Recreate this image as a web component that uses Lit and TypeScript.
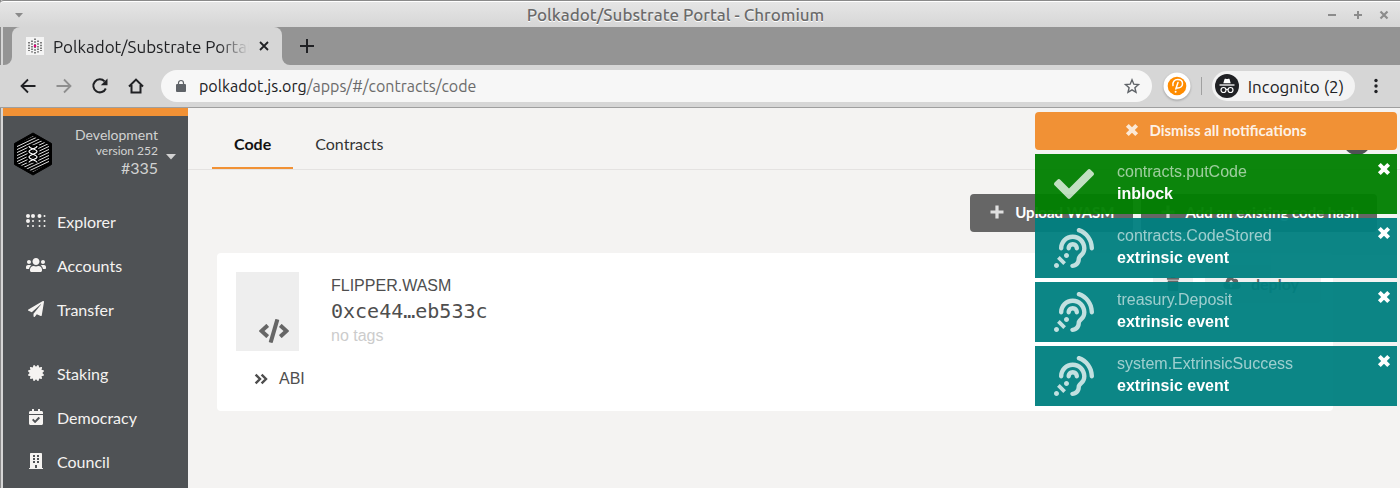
import { LitElement, html, css, svg, nothing } from "lit";
import { customElement, property } from "lit/decorators.js";

type Glyph = { box: string; body: unknown };

const glyphs: Record<string, Glyph> = {
  check: {
    box: "0 0 512 512",
    body: svg`<path d="M173.898 439.404l-166.4-166.4c-9.997-9.997-9.997-26.206 0-36.204l36.203-36.204c9.997-9.998 26.207-9.998 36.204 0L192 312.69 432.095 72.596c9.997-9.997 26.207-9.997 36.204 0l36.203 36.204c9.997 9.997 9.997 26.206 0 36.204l-294.4 294.401c-9.998 9.997-26.207 9.997-36.204-.001z"/>`,
  },
  listen: {
    box: "0 0 512 512",
    body: svg`<path d="M216 260c0 15.464-12.536 28-28 28s-28-12.536-28-28c0-44.112 35.888-80 80-80s80 35.888 80 80c0 15.464-12.536 28-28 28s-28-12.536-28-28c0-13.234-10.767-24-24-24s-24 10.766-24 24zm24-176c-97.047 0-176 78.953-176 176 0 15.464 12.536 28 28 28s28-12.536 28-28c0-66.168 53.832-120 120-120s120 53.832 120 120c0 75.164-71.009 70.311-71.997 143.622L288 404c0 28.673-23.327 52-52 52-15.464 0-28 12.536-28 28s12.536 28 28 28c59.475 0 107.876-48.328 108-107.774.595-34.428 72-48.24 72-144.226 0-97.047-78.953-176-176-176zm-80 236c-17.673 0-32 14.327-32 32s14.327 32 32 32 32-14.327 32-32-14.327-32-32-32zM32 448c-17.673 0-32 14.327-32 32s14.327 32 32 32 32-14.327 32-32-14.327-32-32-32zm480-187.993c0-1.518-.012-3.025-.045-4.531C510.076 140.525 436.157 38.47 327.994 1.511c-14.633-4.998-30.549 2.809-35.55 17.442-5 14.633 2.81 30.549 17.442 35.55 85.906 29.354 144.61 110.513 146.077 201.953l.003.188c.026 1.118.033 2.236.033 3.363 0 15.464 12.536 28 28 28s28.001-12.536 28.001-28zM152.971 439.029l-80-80L39.03 392.97l80 80 33.941-33.941z"/>`,
  },
  code: {
    box: "0 0 640 512",
    body: svg`<path d="M278.9 511.5l-61-17.7c-6.4-1.8-10-8.5-8.2-14.9L346.2 8.7c1.8-6.4 8.5-10 14.9-8.2l61 17.7c6.4 1.8 10 8.5 8.2 14.9L293.8 503.3c-1.9 6.4-8.5 10.1-14.9 8.2zm-114-112.2l43.5-46.4c4.6-4.9 4.3-12.7-.8-17.2L117 256l90.6-79.7c5.1-4.5 5.5-12.3.8-17.2l-43.5-46.4c-4.5-4.8-12.1-5.1-17-.5L3.8 247.2c-5.1 4.7-5.1 12.8 0 17.5l144.1 135.1c4.9 4.6 12.5 4.4 17-.5zm327.2.6l144.1-135.1c5.1-4.7 5.1-12.8 0-17.5L492.1 112.1c-4.8-4.5-12.4-4.3-17 .5L431.6 159c-4.6 4.9-4.3 12.7.8 17.2L523 256l-90.6 79.7c-5.1 4.5-5.5 12.3-.8 17.2l43.5 46.4c4.5 4.9 12.1 5.1 17 .6z"/>`,
  },
  plane: {
    box: "0 0 512 512",
    body: svg`<path d="M476 3.2L12.5 270.6c-18.1 10.4-15.8 35.6 2.2 43.2L121 358.4l287.3-253.2c5.5-4.9 13.3 2.6 8.6 8.3L176 407v80.5c0 23.6 28.5 32.9 42.5 15.8L282 426l124.6 52.2c14.2 6 30.4-2.9 33-18.2l72-432C515 7.8 493.3-6.8 476 3.2z"/>`,
  },
  certificate: {
    box: "0 0 512 512",
    body: svg`<path d="M458.622 255.92l45.985-45.005c13.708-12.977 7.316-36.039-10.664-40.339l-62.65-15.99 17.661-62.015c4.991-17.838-11.829-34.663-29.661-29.671l-61.994 17.667-15.984-62.671C337.085.197 313.765-6.276 300.99 7.228L256 53.57 211.011 7.229c-12.63-13.351-36.047-7.234-40.325 10.668l-15.984 62.671-61.995-17.667C74.87 57.907 58.056 74.738 63.046 92.572l17.661 62.015-62.65 15.99C.069 174.878-6.31 197.944 7.392 210.915l45.985 45.005-45.985 45.004c-13.708 12.977-7.316 36.039 10.664 40.339l62.65 15.99-17.661 62.015c-4.991 17.838 11.829 34.663 29.661 29.671l61.994-17.667 15.984 62.671c4.439 18.575 27.696 24.018 40.325 10.668L256 458.61l44.989 46.001c12.5 13.488 35.987 7.486 40.325-10.668l15.984-62.671 61.994 17.667c17.836 4.994 34.651-11.837 29.661-29.671l-17.661-62.015 62.65-15.99c17.987-4.302 24.366-27.367 10.664-40.339l-45.984-45.004z"/>`,
  },
  calendar: {
    box: "0 0 448 512",
    body: svg`<path d="M436 160H12c-6.627 0-12-5.373-12-12v-36c0-26.51 21.49-48 48-48h48V12c0-6.627 5.373-12 12-12h40c6.627 0 12 5.373 12 12v52h128V12c0-6.627 5.373-12 12-12h40c6.627 0 12 5.373 12 12v52h48c26.51 0 48 21.49 48 48v36c0 6.627-5.373 12-12 12zM12 192h424c6.627 0 12 5.373 12 12v260c0 26.51-21.49 48-48 48H48c-26.51 0-48-21.49-48-48V204c0-6.627 5.373-12 12-12zm333.296 95.947l-28.169-28.398c-4.667-4.705-12.265-4.736-16.97-.068L194.12 364.665l-45.98-46.352c-4.667-4.705-12.266-4.736-16.971-.068l-28.397 28.17c-4.705 4.667-4.736 12.265-.068 16.97l82.601 83.269c4.667 4.705 12.265 4.736 16.97.068l142.953-141.805c4.705-4.667 4.736-12.265.068-16.97z"/>`,
  },
  building: {
    box: "0 0 448 512",
    body: svg`<path fill-rule="evenodd" d="M436 480h-20V24c0-13.255-10.745-24-24-24H56C42.745 0 32 10.745 32 24v456H12c-6.627 0-12 5.373-12 12v20h448v-20c0-6.627-5.373-12-12-12zM128 64h64v64h-64zM256 64h64v64h-64zM128 160h64v64h-64zM256 160h64v64h-64zM128 256h64v64h-64zM256 256h64v64h-64zM192 384h64v96h-64z"/>`,
  },
  users: {
    box: "0 0 640 512",
    body: svg`<path d="M96 224c35.3 0 64-28.7 64-64s-28.7-64-64-64-64 28.7-64 64 28.7 64 64 64zm448 0c35.3 0 64-28.7 64-64s-28.7-64-64-64-64 28.7-64 64 28.7 64 64 64zm32 32h-64c-17.6 0-33.5 7.1-45.1 18.6 40.3 22.1 68.9 62 75.1 109.4h66c17.7 0 32-14.3 32-32v-32c0-35.3-28.7-64-64-64zm-256 0c61.9 0 112-50.1 112-112S381.9 32 320 32 208 82.1 208 144s50.1 112 112 112zm76.8 32h-8.3c-20.8 10-43.9 16-68.5 16s-47.6-6-68.5-16h-8.3C179.6 288 128 339.6 128 403.2V432c0 26.5 21.5 48 48 48h288c26.5 0 48-21.5 48-48v-28.8c0-63.6-51.6-115.2-115.2-115.2zm-223.7-13.4C161.5 263.1 145.6 256 128 256H64c-35.3 0-64 28.7-64 64v32c0 17.7 14.3 32 32 32h65.9c6.3-47.4 34.9-87.3 75.2-109.4z"/>`,
  },
  braille: {
    box: "0 0 640 512",
    body: svg`<circle cx="64" cy="96" r="64"/><circle cx="224" cy="96" r="64"/><circle cx="432" cy="96" r="64"/><circle cx="592" cy="96" r="32"/>
      <circle cx="64" cy="256" r="64"/><circle cx="224" cy="256" r="32"/><circle cx="432" cy="256" r="32"/><circle cx="592" cy="256" r="32"/>
      <circle cx="64" cy="416" r="32"/><circle cx="224" cy="416" r="32"/><circle cx="432" cy="416" r="32"/><circle cx="592" cy="416" r="32"/>`,
  },
  times: {
    box: "0 0 12 12",
    body: svg`<path d="M2 2l8 8M10 2l-8 8" stroke="currentColor" stroke-width="3.4"/>`,
  },
  plus: {
    box: "0 0 14 14",
    body: svg`<path d="M7 .5v13M.5 7h13" stroke="currentColor" stroke-width="3.2"/>`,
  },
  chevrons: {
    box: "0 0 14 12",
    body: svg`<path d="M1.6 1.6L6 6l-4.4 4.4M7.6 1.6L12 6l-4.4 4.4" fill="none" stroke="currentColor" stroke-width="2.4"/>`,
  },
  caret: { box: "0 0 10 6", body: svg`<path d="M0 0h10L5 5.5z"/>` },
  trash: {
    box: "0 0 448 512",
    body: svg`<path d="M32 464a48 48 0 0 0 48 48h288a48 48 0 0 0 48-48V128H32zM432 32H312l-9-19A24 24 0 0 0 281 0H167a24 24 0 0 0-22 13l-9 19H16A16 16 0 0 0 0 48v32a16 16 0 0 0 16 16h416a16 16 0 0 0 16-16V48a16 16 0 0 0-16-16z"/>`,
  },
  cloud: {
    box: "0 0 640 512",
    body: svg`<path fill-rule="evenodd" d="M537.6 226.6c4.1-10.7 6.4-22.4 6.4-34.6 0-53-43-96-96-96-19.7 0-38.1 6-53.3 16.2C367 64.2 315.3 32 256 32c-88.4 0-160 71.6-160 160 0 2.7.1 5.4.2 8.1C40.2 219.8 0 273.2 0 336c0 79.5 64.5 144 144 144h368c70.7 0 128-57.3 128-128 0-61.9-44-113.6-102.4-125.4zM393.4 288H328v112c0 8.8-7.2 16-16 16h-48c-8.8 0-16-7.2-16-16V288h-65.4c-14.3 0-21.4-17.2-11.3-27.3l105.4-105.4c6.2-6.2 16.4-6.2 22.6 0l105.4 105.4c10.1 10.1 2.9 27.3-11.3 27.3z"/>`,
  },
  back: {
    box: "0 0 16 16",
    body: svg`<path d="M15.5 8H2M8 1.5L1.5 8 8 14.5" fill="none" stroke="currentColor" stroke-width="1.8"/>`,
  },
  forward: {
    box: "0 0 16 16",
    body: svg`<path d="M.5 8H14M8 1.5L14.5 8 8 14.5" fill="none" stroke="currentColor" stroke-width="1.8"/>`,
  },
  reload: {
    box: "0 0 16 16",
    body: svg`<path d="M13.8 10.5A6.5 6.5 0 1 1 12.6 3.4" fill="none" stroke="currentColor" stroke-width="2"/><path d="M15.5.5v6.7H8.8z"/>`,
  },
  home: {
    box: "0 0 16 16",
    body: svg`<path d="M1 8.5L8 1.6l7 6.9M3.5 7v7.5h9V7" fill="none" stroke="currentColor" stroke-width="2"/>`,
  },
  lock: {
    box: "0 0 10 12",
    body: svg`<rect x="0" y="4" width="10" height="8" rx="1"/><path d="M2.500 5V3a2.500 2.500 0 0 1 5 0v2" fill="none" stroke="currentColor" stroke-width="1.2"/>`,
  },
  star: {
    box: "0 0 16 16",
    body: svg`<path d="M8 1.8l1.8 4.4 4.7.4-3.6 3.1 1.1 4.6L8 11.900l-4 2.400 1.100-4.600L1.500 6.600l4.700-.4z" fill="none" stroke="currentColor" stroke-width="1.4"/>`,
  },
  close: {
    box: "0 0 10 10",
    body: svg`<path d="M1 1l8 8M9 1L1 9" stroke="currentColor" stroke-width="1.8"/>`,
  },
  add: {
    box: "0 0 14 14",
    body: svg`<path d="M7 0v14M0 7h14" stroke="currentColor" stroke-width="2"/>`,
  },
  maximize: {
    box: "0 0 8 8",
    body: svg`<path d="M4 0v8M0 4h8" stroke="currentColor" stroke-width="2"/>`,
  },
  quit: {
    box: "0 0 8 8",
    body: svg`<path d="M.5.5l7 7M7.5.5l-7 7" stroke="currentColor" stroke-width="2.2"/>`,
  },
  dots: {
    box: "0 0 4 16",
    body: svg`<circle cx="2" cy="2.500" r="1.700"/><circle cx="2" cy="8" r="1.700"/><circle cx="2" cy="13.500" r="1.700"/>`,
  },
  polka: {
    box: "0 0 28 28",
    body: svg`<circle cx="14" cy="14" r="13.5" fill="#fff"/><circle cx="14" cy="14" r="9.3" fill="#ff8c00"/>
      <path d="M10 13.500c-.8-3.500 1.500-6 4.700-6s4.800 1.800 4.800 4.200-2 4.200-4.600 4.200h-1.500M15 10.500l-2.200 6.500" fill="none" stroke="#fff" stroke-width="1.500" stroke-linecap="round"/><circle cx="12.600" cy="19.800" r="1" fill="#fff"/>`,
  },
  incognito: {
    box: "0 0 24 24",
    body: svg`<circle cx="12" cy="12" r="12" fill="#202124"/><path d="M8.300 9.200l1.200-4c.2-.6.800-.6 1.300-.4 1 .3 1.500.3 2.500 0 .5-.2 1.100-.2 1.300.4l1.100 4z" fill="#fff"/>
      <path d="M4.500 11h15" stroke="#fff" stroke-width="1.300"/><circle cx="8.500" cy="16" r="2.500" fill="none" stroke="#fff" stroke-width="1.200"/><circle cx="15.500" cy="16" r="2.500" fill="none" stroke="#fff" stroke-width="1.200"/><path d="M11 15.600q1-.7 2 0" fill="none" stroke="#fff"/>`,
  },
  favicon: {
    box: "0 0 18 18",
    body: svg`<rect width="18" height="18" fill="#f4f4f4"/>
      <path d="M3 5v9M6 3.500v12M9 1.500v16M12 3.500v12M15 5v9" stroke="#555" stroke-width="1.500" stroke-dasharray="1.500 1.200"/><circle cx="9" cy="9" r="1.300" fill="#e6007a"/>`,
  },
};

const hexLines = Array.from({ length: 15 }, (_, i) => i * 3 - 4);

@customElement("ui-icon")
export class UiIcon extends LitElement {
  @property() name = "";
  static styles = css`
    :host { display: inline-flex; flex: none; }
    .glyph { width: 100%; height: 100%; fill: currentColor; display: block; overflow: visible; }
  `;
  render() {
    const g = glyphs[this.name];
    return g ? html`<svg class="glyph" viewBox=${g.box} aria-hidden="true">${g.body}</svg>` : nothing;
  }
}

@customElement("browser-chrome")
export class BrowserChrome extends LitElement {
  static styles = css`
    :host { display: block; font-family: Ubuntu, "Noto Sans", sans-serif; font-size: 17px; color: #202124; }
    button { font: inherit; color: inherit; background: none; border: 0; padding: 0; display: flex; align-items: center; }
    .title { box-sizing: border-box; height: 27px; display: grid; grid-template-columns: 1fr auto 1fr; align-items: center;
      padding: 2px 12px 0 15px; border-top: 1px solid #8a8a8a; box-shadow: inset 0 1px #fff; border-top-left-radius: 4px;
      background: linear-gradient(#e6e6e6, #d6d6d6); color: #6a6a6a; }
    .title .menu { width: 8px; height: 5px; color: #8a8a8a; }
    .title .name { font-size: 17px; font-weight: 500; line-height: 20px; text-shadow: 0 1px #fff; margin: 0; padding-right: 52px; }
    .controls { display: flex; justify-content: flex-end; gap: 18px; color: #8c8c8c; }
    .controls ui-icon { width: 8px; height: 8px; }
    .minus { width: 8px; height: 2px; background: currentColor; }
    .strip { margin-left: 3px; height: 38px; display: flex; background: #949494; }
    .edge { width: 9px; background: #d6d6d6; }
    .edge::before { content: ""; display: block; height: 100%; background: #949494; border-bottom-right-radius: 8px; }
    .tab { box-sizing: border-box; width: 270px; display: flex; align-items: center; background: #d6d6d6; border-radius: 8px 8px 0 0; padding: 0 13px 0 14px; }
    .tab .fav { width: 18px; height: 18px; margin-right: 9px; }
    .tab .label { flex: 1; min-width: 0; overflow: hidden; white-space: nowrap;
      -webkit-mask-image: linear-gradient(90deg, #000 84%, transparent); mask-image: linear-gradient(90deg, #000 84%, transparent); }
    .tab .x { width: 10px; height: 10px; margin-left: 10px; }
    .rest { flex: 1; display: flex; align-items: center; background: #d6d6d6; }
    .rest > div { flex: 1; height: 100%; display: flex; align-items: center; padding-left: 18px; background: #949494; border-bottom-left-radius: 8px; }
    .rest ui-icon { width: 14px; height: 14px; }
    .bar { box-sizing: border-box; height: 43px; display: flex; align-items: center; padding: 0 22px 0 20px; background: #d6d6d6; border-bottom: 1px solid #9f9f9f; }
    .nav { display: flex; gap: 20px; }
    .nav ui-icon { width: 16px; height: 16px; }
    .off { color: #8e8e8e; }
    .address { flex: 1; min-width: 0; display: flex; align-items: center; height: 32px; border-radius: 16px; background: #f7f7f7; margin: 0 11px 0 17px; padding: 0 12px 0 15px; }
    .address .lock { width: 10px; height: 12px; color: #5f6368; }
    .address .star { width: 16px; height: 16px; color: #5f6368; }
    .url { flex: 1; margin: 0 13px; white-space: nowrap; color: #202124; text-decoration: none; font-size: 16px; }
    .path { color: #6b6b6b; }
    .ext { width: 28px; height: 28px; filter: drop-shadow(0 1px 1px #0004); }
    .sep { width: 1px; height: 18px; background: #a0a0a0; margin: 0 10px 0 10px; }
    .profile { height: 30px; border-radius: 15px; background: #f3f3f3; padding: 0 11px 0 3px; }
    .profile ui-icon { width: 24px; height: 24px; margin-right: 9px; }
    .more { width: 4px; height: 16px; margin-left: 19px; }
  `;
  render() {
    return html`
      <div class="title">
        <ui-icon class="menu" name="caret"></ui-icon>
        <p class="name">Polkadot/Substrate Portal - Chromium</p>
        <div class="controls">
          <button aria-label="Minimize"><span class="minus"></span></button>
          <button aria-label="Maximize"><ui-icon name="maximize"></ui-icon></button>
          <button aria-label="Close window"><ui-icon name="quit"></ui-icon></button>
        </div>
      </div>
      <div class="strip">
        <div class="edge"></div>
        <div class="tab">
          <ui-icon class="fav" name="favicon"></ui-icon>
          <span class="label">Polkadot/Substrate Portal</span>
          <button aria-label="Close tab"><ui-icon class="x" name="close"></ui-icon></button>
        </div>
        <div class="rest"><div><button aria-label="New tab"><ui-icon name="add"></ui-icon></button></div></div>
      </div>
      <div class="bar">
        <div class="nav">
          <button aria-label="Back"><ui-icon name="back"></ui-icon></button>
          <button aria-label="Forward" class="off"><ui-icon name="forward"></ui-icon></button>
          <button aria-label="Reload"><ui-icon name="reload"></ui-icon></button>
          <button aria-label="Home"><ui-icon name="home"></ui-icon></button>
        </div>
        <div class="address">
          <ui-icon class="lock" name="lock"></ui-icon>
          <a class="url" href="#/contracts/code">polkadot.js.org<span class="path">/apps/#/contracts/code</span></a>
          <button aria-label="Bookmark"><ui-icon class="star" name="star"></ui-icon></button>
        </div>
        <button aria-label="Extension"><ui-icon class="ext" name="polka"></ui-icon></button>
        <span class="sep"></span>
        <button class="profile"><ui-icon name="incognito"></ui-icon>Incognito (2)</button>
        <button aria-label="Menu"><ui-icon class="more" name="dots"></ui-icon></button>
      </div>
    `;
  }
}

@customElement("side-bar")
export class SideBar extends LitElement {
  static styles = css`
    :host { display: block; box-sizing: border-box; width: 185px; background: #4f5255; border-top: 8px solid #f19135; color: #f5f3f1; font-family: Lato, sans-serif; }
    .chain { display: flex; align-items: center; width: 100%; box-sizing: border-box; padding: 10px 12px 0 9px; font: inherit; color: #d2d2d2; background: none; border: 0; text-align: right; }
    .logo { width: 42px; height: 44px; flex: none; padding-top: 4px; }
    .info { flex: 1; display: flex; flex-direction: column; font-size: 14px; line-height: 18px; }
    .version { font-size: 12px; line-height: 14px; }
    .block { font-size: 16px; line-height: 20px; }
    .chain ui-icon { width: 10px; height: 6px; margin-left: 8px; padding-top: 10px; }
    .menu { display: flex; flex-direction: column; list-style: none; margin: 21px 0 0; padding: 0; }
    .gap { margin-top: 20px; }
    .link { display: flex; align-items: center; height: 44px; padding-left: 23px; color: inherit; text-decoration: none; font-size: 16px; }
    .link ui-icon { width: 20px; height: 16px; margin-right: 11px; }
  `;
  private items = [
    ["braille", "Explorer"], ["users", "Accounts"], ["plane", "Transfer"],
    ["certificate", "Staking"], ["calendar", "Democracy"], ["building", "Council"],
  ];
  render() {
    return html`
      <button class="chain" aria-label="Switch network">
        <svg class="logo" viewBox="0 0 42 44" aria-hidden="true">
          <defs><clipPath id="hex"><path d="M21 4L37 13v18L21 40 5 31V13z"/></clipPath></defs>
          <path d="M21 1L39.500 11.500v21L21 43 2.500 32.500v-21z" fill="#000" stroke="#000"/>
          <g clip-path="url(#hex)">
            ${hexLines.map((y) => svg`<path d=${`M2 ${y + 14}L40 ${y - 4}`} stroke="#ddd" stroke-width="1"/>`)}
            <path d="M17 13c0 3 8 3 8 6s-8 3-8 6 8 3 8 6M25 13c0 3-8 3-8 6s8 3 8 6-8 3-8 6" fill="none" stroke="#000" stroke-width="5"/>
            <path d="M17 14c0 3 8 3 8 5.500s-8 3-8 5.500 8 3 8 5.500M25 14c0 3-8 3-8 5.500s8 3 8 5.500-8 3-8 5.500" fill="none" stroke="#fff" stroke-width="1.200"/>
          </g>
        </svg>
        <span class="info"><span>Development</span><span class="version">version 252</span><span class="block">#335</span></span>
        <ui-icon name="caret"></ui-icon>
      </button>
      <ul class="menu">
        ${this.items.map(([icon, text], i) => html`
          <li class=${i === 3 ? "gap" : ""}><a class="link" href="#/${text.toLowerCase()}"><ui-icon name=${icon}></ui-icon>${text}</a></li>`)}
      </ul>
    `;
  }
}

@customElement("toast-stack")
export class ToastStack extends LitElement {
  static styles = css`
    :host { display: flex; flex-direction: column; gap: 4px; font-family: "Liberation Sans", sans-serif; color: #fff; }
    button { border: 0; padding: 0; color: inherit; background: none; display: flex; }
    .dismiss { height: 38px; border-radius: 4px; background: #f19135; font: 700 15px/18px Lato, sans-serif; align-items: center; justify-content: center; color: #fffc; gap: 10px; padding-bottom: 2px; }
    .dismiss ui-icon { width: 14px; height: 14px; }
    .dismiss span { color: #ffffffe6; }
    .toast { box-sizing: border-box; height: 60px; display: flex; align-items: flex-start; padding: 7px 6px 0 19px; background: #008080; opacity: 0.95; }
    .ok { background: #008000; }
    .icon { width: 40px; height: 40px; padding-top: 3px; opacity: 0.75; }
    .text { flex: 1; margin-left: 23px; font-size: 16px; line-height: 22px; }
    .action { opacity: 0.6; }
    .status { font-weight: 700; }
    .action, .status { margin: 0; }
    .close { padding-top: 1px; }
    .close ui-icon { width: 14px; height: 14px; }
  `;
  private toasts = [
    ["contracts.putCode", "inblock", "check"],
    ["contracts.CodeStored", "extrinsic event", "listen"],
    ["treasury.Deposit", "extrinsic event", "listen"],
    ["system.ExtrinsicSuccess", "extrinsic event", "listen"],
  ];
  render() {
    return html`
      <button class="dismiss"><ui-icon name="times"></ui-icon><span>Dismiss all notifications</span></button>
      ${this.toasts.map(([action, status, icon]) => html`
        <div class="toast ${icon === "check" ? "ok" : ""}" role="status">
          <ui-icon class="icon" name=${icon}></ui-icon>
          <div class="text"><p class="action">${action}</p><p class="status">${status}</p></div>
          <button class="close" aria-label="Dismiss"><ui-icon name="times"></ui-icon></button>
        </div>`)}
    `;
  }
}

@customElement("app-root")
export class AppRoot extends LitElement {
  static styles = css`
    :host { display: flex; flex-direction: column; min-height: 100vh; background: #d6d6d6; box-shadow: inset 1px 0 #8a8a8a; font-family: Lato, sans-serif; color: #4e4e4e; }
    button { border: 0; font: 700 15px Lato, sans-serif; display: flex; align-items: center; border-radius: 4px; height: 38px; padding: 0; }
    .view { flex: 1; display: flex; margin-left: 3px; position: relative; background: #f4f3f2; }
    .page { flex: 1; min-width: 0; }
    .tabs { display: flex; align-items: flex-end; height: 61px; padding: 0 29px 0 24px; border-bottom: 1px solid #e4e2e1; }
    .tab { padding: 0 22px 12px; line-height: 22px; border-bottom: 2px solid transparent; font-size: 16px; color: #333; text-decoration: none; }
    .active { border-color: #f19135; font-weight: 700; color: #111; }
    .help { width: 28px; height: 28px; border-radius: 50%; background: #4f5255; color: #fff; justify-content: center; margin: 0 0 14px auto; }
    .content { padding: 24px 23px 0 29px; }
    .actions { display: flex; justify-content: flex-end; gap: 8px; }
    .action { background: #666; color: #fff; padding: 0 18px 2px 20px; gap: 11px; }
    .action ui-icon { width: 14px; height: 14px; opacity: 0.8; }
    .card { display: flex; margin: 21px 44px 0 0; padding: 12px 12px 12px 19px; min-height: 134px; background: #fff; border-radius: 4px; font-family: "Liberation Sans", sans-serif; }
    .body { flex: 1; padding-top: 7px; }
    .row { display: flex; gap: 32px; }
    .thumb { width: 63px; height: 79px; box-sizing: border-box; background: #eee; display: flex; align-items: flex-end; justify-content: flex-end; padding: 0 10px 8px 0; color: #666; }
    .thumb ui-icon { width: 30px; height: 24px; }
    .file { font-size: 16px; line-height: 18px; padding-top: 5px; text-transform: uppercase; }
    .hash { font: 20px/32px "DejaVu Sans Mono", monospace; }
    .tags { font-size: 16px; line-height: 18px; color: #ccc; }
    .file, .hash, .tags { margin: 0; }
    .abi { font: 16px/18px "Liberation Sans", sans-serif; height: 18px; color: inherit; background: none; margin: 19px 0 0 18px; gap: 11px; }
    .abi ui-icon { width: 14px; height: 12px; }
    .tools { display: flex; gap: 12px; }
    .tool { background: #f0f0f0; color: #666; padding: 0 22px 2px 18px; gap: 10px; font-size: 16px; }
    .tool ui-icon { width: 18px; height: 14px; }
    .square { padding: 0 11px; }
    .toasts { position: absolute; top: 4px; right: 3px; width: 362px; }
  `;
  render() {
    return html`
      <browser-chrome></browser-chrome>
      <div class="view">
        <side-bar></side-bar>
        <main class="page">
          <nav class="tabs">
            <a class="tab active" href="#/contracts/code">Code</a>
            <a class="tab" href="#/contracts">Contracts</a>
            <button class="help" aria-label="Help"></button>
          </nav>
          <div class="content">
            <div class="actions">
              <button class="action"><ui-icon name="plus"></ui-icon>Upload WASM</button>
              <button class="action"><ui-icon name="plus"></ui-icon>Add an existing code hash</button>
            </div>
            <article class="card">
              <div class="body">
                <div class="row">
                  <div class="thumb"><ui-icon name="code"></ui-icon></div>
                  <div>
                    <p class="file">flipper.wasm</p>
                    <p class="hash">0xce44…eb533c</p>
                    <p class="tags">no tags</p>
                  </div>
                </div>
                <button class="abi"><ui-icon name="chevrons"></ui-icon>ABI</button>
              </div>
              <div class="tools">
                <button class="tool square" aria-label="Delete"><ui-icon name="trash"></ui-icon></button>
                <button class="tool"><ui-icon name="cloud"></ui-icon>deploy</button>
              </div>
            </article>
          </div>
        </main>
        <toast-stack class="toasts"></toast-stack>
      </div>
    `;
  }
}
